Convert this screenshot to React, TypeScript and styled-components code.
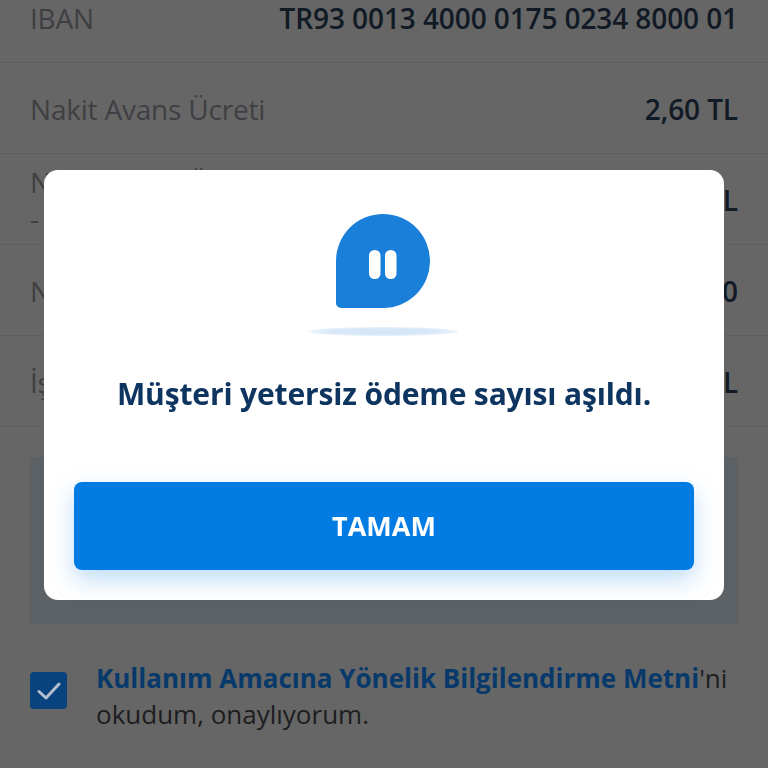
import React from 'react';
import styled, { createGlobalStyle } from 'styled-components';

const GlobalStyle = createGlobalStyle`
  html, body {
    margin: 0;
    height: 100%;
    background: #666666;
    overflow: hidden;
    font-family: "Open Sans", "Liberation Sans", sans-serif;
  }
`

const rows = [
    { label: 'IBAN', value: 'TR93 0013 4000 0175 0234 8000 01' },
    { label: 'Nakit Avans Ücreti', value: '2,60 TL' },
    { label: 'Nakit Avans Ücreti BSMV', note: '-', value: '0,13 TL' },
    { label: 'Nakit Avans Taksit', value: '0' },
    { label: 'İşlem Tutarı', value: '100,00 TL' },
]

export default function App() {
    return (
        <>
            <GlobalStyle />
            <Page>
                {rows.map((row) => (
                    <Row key={row.label}>
                        <LabelBox>
                            <Label>{row.label}</Label>
                            {row.note && <Label>{row.note}</Label>}
                        </LabelBox>
                        <Value>{row.value}</Value>
                    </Row>
                ))}
                <InfoBox />
                <Consent>
                    <CheckBox>
                        <svg width="24" height="18" viewBox="0 0 24 18" fill="none">
                            <path d="M2 9.5 L9 16 L22 2" stroke="#b4bfcb" strokeWidth="3" strokeLinecap="round" strokeLinejoin="round" />
                        </svg>
                    </CheckBox>
                    <ConsentText>
                        <ConsentLink>Kullanım Amacına Yönelik Bilgilendirme Metni</ConsentLink>'ni okudum, onaylıyorum.
                    </ConsentText>
                </Consent>
            </Page>
            <Overlay>
                <Modal>
                    <IconWrap>
                        <svg width="94" height="94" viewBox="0 0 94 94">
                            <path d="M47 0 A47 47 0 1 1 47 94 H5 A5 5 0 0 1 0 89 V47 A47 47 0 0 1 47 0 Z" fill="#1a7fd9" />
                            <rect x="33" y="36" width="11.5" height="29" rx="5.5" fill="#fff" />
                            <rect x="49" y="36" width="11.5" height="29" rx="5.5" fill="#fff" />
                        </svg>
                        <IconShadow />
                    </IconWrap>
                    <Title>Müşteri yetersiz ödeme sayısı aşıldı.</Title>
                    <OkButton>TAMAM</OkButton>
                </Modal>
            </Overlay>
        </>
    )
}

const Page = styled.div`
    height: 768px;
    margin-top: -28px;
    padding: 0 30px;
    box-sizing: border-box;
`
const Row = styled.div`
    height: 91px;
    margin: 0 -30px;
    padding: 2px 30px 0;
    box-sizing: border-box;
    display: flex;
    justify-content: space-between;
    align-items: center;
    border-bottom: 1px solid #5e5e5e;
`
const LabelBox = styled.div`
    display: flex;
    flex-direction: column;
`
const Label = styled.span`
    font-size: 28px;
    line-height: 36px;
    color: #3f3f43;
    letter-spacing: -0.2px;
`
const Value = styled.span`
    font-size: 28px;
    line-height: 36px;
    font-weight: 600;
    color: #111a25;
    letter-spacing: -0.1px;
`
const InfoBox = styled.div`
    height: 167px;
    margin-top: 30px;
    background: #5c6165;
`
const Consent = styled.div`
    display: flex;
    align-items: flex-start;
    gap: 30px;
    margin-top: 36px;
`
const CheckBox = styled.div`
    width: 37px;
    height: 37px;
    margin-top: 12px;
    flex-shrink: 0;
    border-radius: 4px;
    background: #08437f;
    display: flex;
    align-items: center;
    justify-content: center;
`
const ConsentText = styled.p`
    margin: 0 0 0 -1px;
    font-size: 26px;
    line-height: 36px;
    color: #1d1d21;
`
const ConsentLink = styled.span`
    font-weight: 700;
    color: #07396a;
`
const Overlay = styled.div`
    position: fixed;
    inset: 0;
    display: flex;
    align-items: flex-start;
    justify-content: center;
    padding-top: 170px;
`
const Modal = styled.div`
    width: 680px;
    height: 430px;
    padding: 44px 30px 30px;
    box-sizing: border-box;
    border-radius: 14px;
    background: #fff;
    display: flex;
    flex-direction: column;
    align-items: center;
`
const IconWrap = styled.div`
    height: 122px;
    margin-right: 2px;
    display: flex;
    flex-direction: column;
    align-items: center;
    justify-content: space-between;
    svg {
        display: block;
    }
`
const IconShadow = styled.div`
    width: 150px;
    height: 9px;
    border-radius: 50%;
    background: radial-gradient(ellipse at center, #d2e5f7 0%, #d8e8f8 50%, rgba(235, 244, 252, 0.6) 78%, rgba(255, 255, 255, 0) 100%);
`
const Title = styled.h2`
    margin: 39px 0 0;
    font-size: 30px;
    line-height: 38px;
    font-weight: 700;
    letter-spacing: -0.14px;
    color: #0e3460;
`
const OkButton = styled.button`
    width: 620px;
    height: 88px;
    margin-top: auto;
    padding: 0 0 2px;
    border: none;
    border-radius: 8px;
    background: #027be3;
    color: #fff;
    font-family: inherit;
    font-size: 27px;
    font-weight: 700;
    box-shadow: 0 10px 24px rgba(2, 123, 227, 0.25);
`
